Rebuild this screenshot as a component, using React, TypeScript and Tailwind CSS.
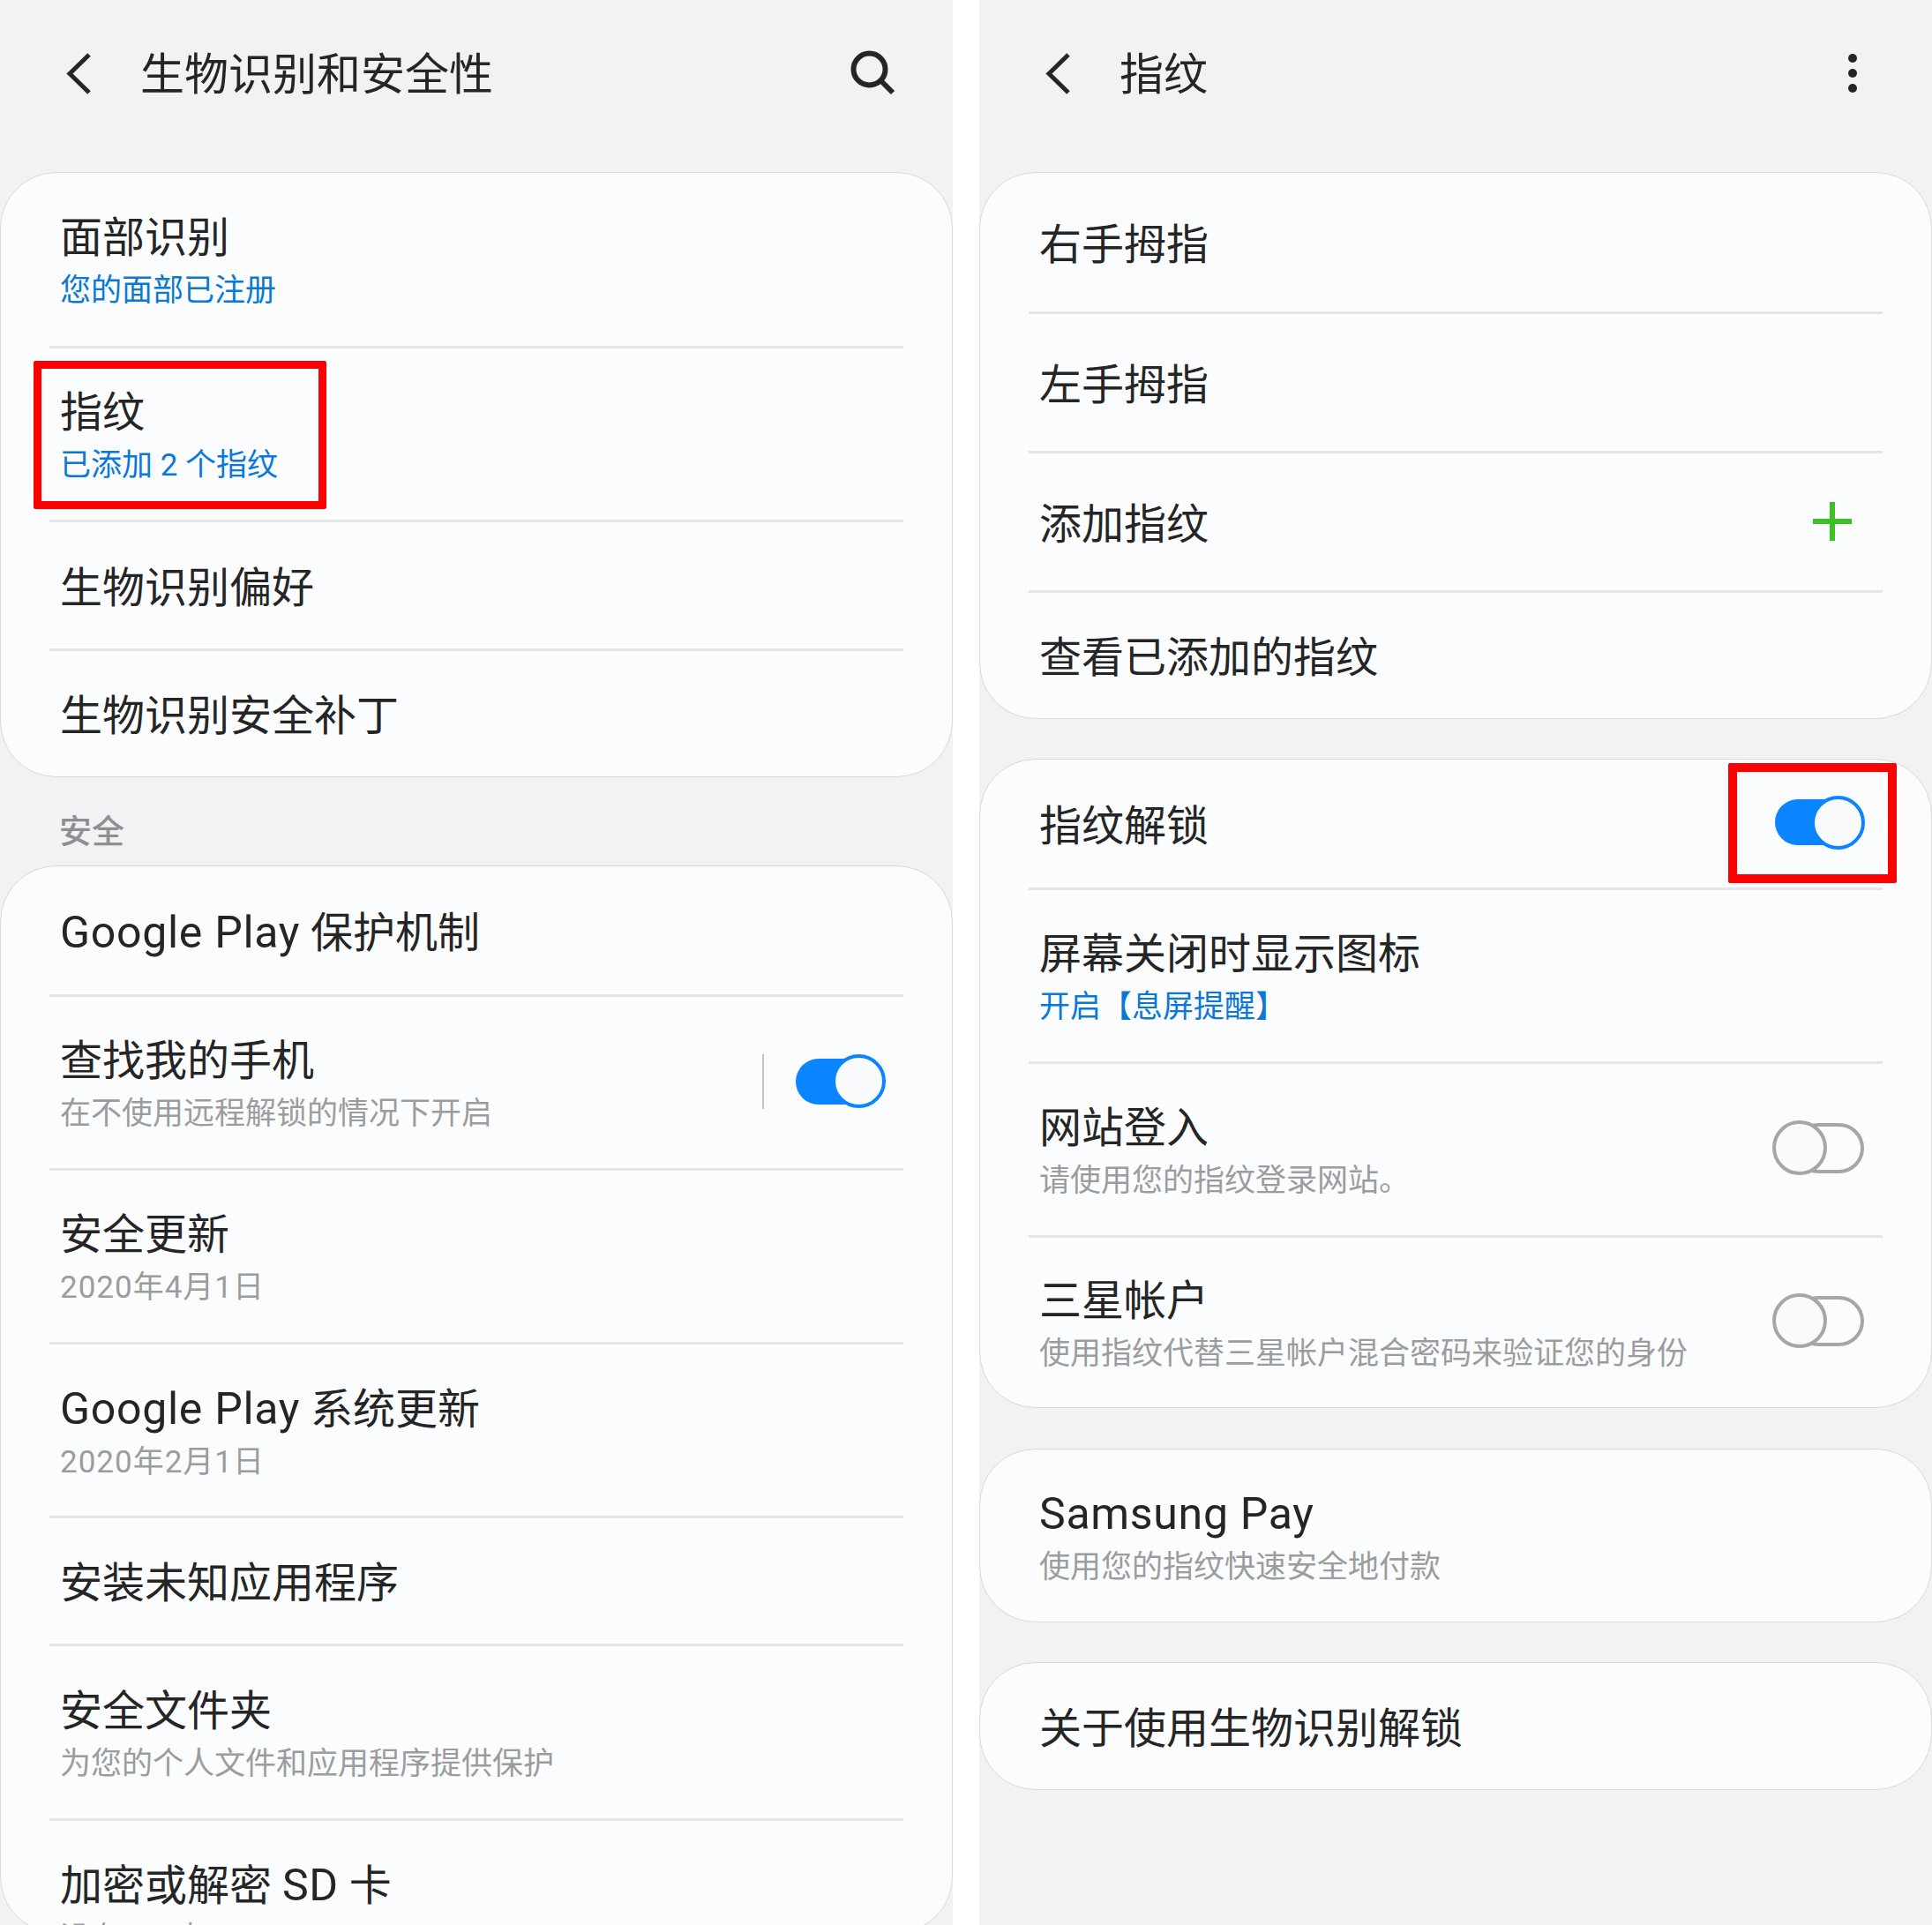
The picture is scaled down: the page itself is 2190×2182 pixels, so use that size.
const ChevronLeft = () => (
  <svg width="40" height="56" viewBox="0 0 40 56" fill="none" className="shrink-0">
    <path d="M34 6 L12 27.5 L34 49" stroke="#252525" strokeWidth="5" strokeLinecap="butt" />
  </svg>
);

const SearchIcon = () => (
  <svg width="56" height="56" viewBox="0 0 56 56" fill="none" className="mb-[3px] shrink-0">
    <circle cx="25.5" cy="23.5" r="18" stroke="#252525" strokeWidth="6" />
    <path d="M38 36 L52 50" stroke="#252525" strokeWidth="6" />
  </svg>
);

const MoreIcon = () => (
  <div className="mb-[3px] flex w-[10px] shrink-0 flex-col gap-[7px]">
    <div className="h-[10px] w-[10px] rounded-full bg-[#252525]" />
    <div className="h-[10px] w-[10px] rounded-full bg-[#252525]" />
    <div className="h-[10px] w-[10px] rounded-full bg-[#252525]" />
  </div>
);

const PlusIcon = () => (
  <svg width="46" height="46" viewBox="0 0 46 46" fill="none" className="mr-[14px] mb-[2px] shrink-0">
    <path d="M23 1 V45 M1 23 H45" stroke="#3cc024" strokeWidth="6" />
  </svg>
);

const ToggleOn = () => (
  <div className="relative mb-[3px] flex h-[61px] w-[102px] shrink-0 items-center">
    <div className="h-[52px] w-[100px] rounded-full bg-[#0a84ff]" />
    <div className="absolute top-0 right-0 h-[61px] w-[61px] rounded-full border-[4px] border-[#0a84ff] bg-[#f9fafb]" />
  </div>
);

const ToggleOff = () => (
  <div className="relative mr-px mb-[4px] flex h-[62px] w-[104px] shrink-0 items-center justify-end">
    <div className="h-[57px] w-[80px] rounded-full border-[4px] border-[#a5a6a8]" />
    <div className="absolute top-0 left-0 h-[62px] w-[62px] rounded-full border-[4px] border-[#a5a6a8] bg-[#f9fafb]" />
  </div>
);

const Sep = () => <div className="mx-[55px] h-[3px] bg-[#e4e5e7]" />;

// Latin words sit a little larger than the CJK glyphs in the reference
const Latin = ({ children }: { children: React.ReactNode }) => (
  <span className="text-[50px] tracking-[0.7px]">{children}</span>
);

type RowProps = {
  title: React.ReactNode;
  sub?: string;
  blue?: boolean;
  date?: boolean;
  className: string;
  children?: React.ReactNode;
};

const Row = ({ title, sub, blue, date, className, children }: RowProps) => (
  <div className={`flex items-center pr-[75px] pl-[67px] ${className}`}>
    <div className="min-w-0 flex-1 pt-[6px]">
      <div className="text-[48px] leading-[66px] whitespace-nowrap text-[#252525]">{title}</div>
      {sub && (
        <div
          className={`text-[35px] leading-[54px] whitespace-nowrap ${blue ? "text-[#0a78d6]" : "text-[#9b9c9d]"} ${date ? "tracking-[1px]" : ""}`}
        >
          {sub}
        </div>
      )}
    </div>
    {children}
  </div>
);

const Card = ({ className, children }: { className?: string; children: React.ReactNode }) => (
  <div className={`overflow-hidden rounded-[64px] border border-[#d8d9db] bg-[#fbfcfe] ${className ?? ""}`}>{children}</div>
);

const App = () => {
  return (
    <div className="flex h-[2182px] w-[2190px] justify-between overflow-hidden bg-white font-[Roboto,'Noto_Sans_CJK_SC',sans-serif]">
      {/* Left: biometrics and security */}
      <div className="relative h-full w-[1080px] overflow-hidden bg-[#f1f2f4]">
        <div className="flex h-[168px] items-center pr-[64px] pl-[67px]">
          <ChevronLeft />
          <div className="ml-[52px] flex-1 pt-[2px] text-[50px] text-[#252525]">生物识别和安全性</div>
          <SearchIcon />
        </div>
        <Card className="mt-[27px]">
          <Row title="面部识别" sub="您的面部已注册" blue className="h-[196px]" />
          <Sep />
          <Row title="指纹" sub="已添加 2 个指纹" blue className="h-[194px]" />
          <Sep />
          <Row title="生物识别偏好" className="h-[143px]" />
          <Sep />
          <Row title="生物识别安全补丁" className="h-[142px]" />
        </Card>
        <div className="flex h-[100px] items-center pt-[26px] pl-[67px] text-[37px] font-medium text-[#8e8f90]">安全</div>
        <Card className="h-[1210px]">
          <Row
            title={
              <>
                <Latin>Google Play</Latin> 保护机制
              </>
            }
            className="h-[145px]"
          />
          <Sep />
          <Row title="查找我的手机" sub="在不使用远程解锁的情况下开启" className="h-[194px]">
            <div className="mr-[36px] mb-[3px] h-[62px] w-[2px] bg-[#c4c5c6]" />
            <ToggleOn />
          </Row>
          <Sep />
          <Row title="安全更新" sub="2020年4月1日" date className="h-[194px]" />
          <Sep />
          <Row
            title={
              <>
                <Latin>Google Play</Latin> 系统更新
              </>
            }
            sub="2020年2月1日"
            date
            className="h-[194px]"
          />
          <Sep />
          <Row title="安装未知应用程序" className="h-[142px]" />
          <Sep />
          <Row title="安全文件夹" sub="为您的个人文件和应用程序提供保护" className="h-[195px]" />
          <Sep />
          <Row
            title={
              <>
                加密或解密 <Latin>SD</Latin> 卡
              </>
            }
            sub="没有 SD 卡"
            className="h-[194px]"
          />
        </Card>
        {/* Highlight box */}
        <div className="absolute top-[409px] left-[38px] h-[168px] w-[332px] rounded-[2px] border-[9px] border-[#ff0000]" />
      </div>

      {/* Right: fingerprints */}
      <div className="relative h-full w-[1080px] overflow-hidden bg-[#f1f2f4]">
        <div className="flex h-[168px] items-center pr-[85px] pl-[67px]">
          <ChevronLeft />
          <div className="ml-[52px] flex-1 pt-[2px] text-[50px] text-[#252525]">指纹</div>
          <MoreIcon />
        </div>
        <Card className="mt-[27px]">
          <Row title="右手拇指" className="h-[157px]" />
          <Sep />
          <Row title="左手拇指" className="h-[155px]" />
          <Sep />
          <Row title="添加指纹" className="h-[155px]">
            <PlusIcon />
          </Row>
          <Sep />
          <Row title="查看已添加的指纹" className="h-[142px]" />
        </Card>
        <Card className="mt-[45px]">
          <Row title="指纹解锁" className="h-[145px]">
            <ToggleOn />
          </Row>
          <Sep />
          <Row title="屏幕关闭时显示图标" sub="开启【息屏提醒】" blue className="h-[194px]" />
          <Sep />
          <Row title="网站登入" sub="请使用您的指纹登录网站。" className="h-[194px]">
            <ToggleOff />
          </Row>
          <Sep />
          <Row title="三星帐户" sub="使用指纹代替三星帐户混合密码来验证您的身份" className="h-[192px]">
            <ToggleOff />
          </Row>
        </Card>
        <Card className="mt-[46px]">
          <Row title={<Latin>Samsung Pay</Latin>} sub="使用您的指纹快速安全地付款" className="h-[195px]" />
        </Card>
        <Card className="mt-[45px]">
          <Row title="关于使用生物识别解锁" className="h-[143px]" />
        </Card>
        {/* Highlight box */}
        <div className="absolute top-[865px] left-[849px] h-[136px] w-[191px] rounded-[2px] border-[10px] border-[#ff0000]" />
      </div>
    </div>
  );
};

export default App;
